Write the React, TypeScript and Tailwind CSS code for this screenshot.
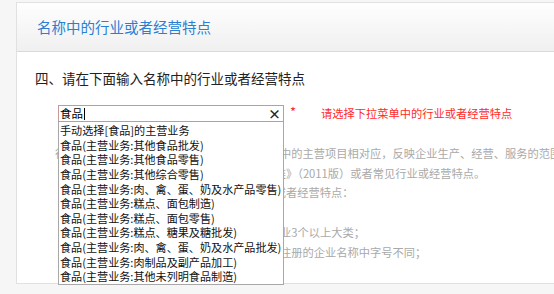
import React from "react";

const items = [
  "手动选择[食品]的主营业务",
  "食品(主营业务:其他食品批发)",
  "食品(主营业务:其他食品零售)",
  "食品(主营业务:其他综合零售)",
  "食品(主营业务:肉、禽、蛋、奶及水产品零售)",
  "食品(主营业务:糕点、面包制造)",
  "食品(主营业务:糕点、面包零售)",
  "食品(主营业务:糕点、糖果及糖批发)",
  "食品(主营业务:肉、禽、蛋、奶及水产品批发)",
  "食品(主营业务:肉制品及副产品加工)",
  "食品(主营业务:其他未列明食品制造)",
];

const grayLines = [
  "行业或经营特点应当与企业拟登记的经营范围中的主营项目相对应，反映企业生产、经营、服务的范围",
  "行业或经营特点可以参照《国民经济行业分类》（2011版）或者常见行业或经营特点。",
  "您需要在下方输入框中输入企业名称的行业或者经营特点：",
  "1、与企业名称中字号相同；",
  "2、名称中的行业或经营特点跨越国民经济行业3个以上大类；",
  "3、行业或经营特点应当与本行政区域内已经注册的企业名称中字号不同；",
];

export default function App() {
  return (
    <div
      className="w-[554px] h-[294px] overflow-hidden bg-[#f6f6f6] pl-[16px] pt-[2px]"
      style={{ fontFamily: '"Noto Sans CJK SC", "Noto Sans", sans-serif' }}
    >
      <div className="h-[282px] bg-white border-l border-t border-b border-[#e1e1e1]">
        <div className="h-[49px] border-b border-[#dadada] bg-gradient-to-b from-[#fefefe] to-[#f0f0f0] flex items-center pl-[20px]">
          <span className="text-[14.5px] leading-[20px] text-[#2a7fd3]">名称中的行业或者经营特点</span>
        </div>
        <div className="pl-[18px]">
          <div className="mt-[16px] text-[13.5px] leading-[20px] text-[#222]">
            四、请在下面输入名称中的行业或者经营特点
          </div>
          <div className="mt-[17px] ml-[23px] flex items-start">
            <div className="relative w-[226px]">
              <div className="h-[17px] border border-[#c39a9a] bg-white flex items-center pl-[1px] pr-[2px]">
                <span className="text-[11.5px] leading-[15px] text-black">食品</span>
                <span className="w-px h-[12px] bg-black ml-[1px]" />
                <span className="flex-1" />
                <span className="text-[13px] leading-[15px] font-bold text-[#222]">×</span>
              </div>
              <div className="absolute left-0 top-[17px] w-[226px] bg-white border border-t-0 border-[#a8a8a8] z-10 pt-[1px]">
                {items.map((t, i) => (
                  <div key={i} className="h-[14.65px] leading-[14.65px] text-[11.1px] text-[#111] pl-[1px] whitespace-nowrap">
                    {t}
                  </div>
                ))}
              </div>
            </div>
            <span className="ml-[6px] text-[13px] leading-[14px] text-[#ff2a2a]">*</span>
            <span className="ml-[25px] mt-[1px] text-[11.25px] leading-[14px] text-[#ff2a2a]">
              请选择下拉菜单中的行业或者经营特点
            </span>
          </div>
          <div className="mt-[22px] ml-[20px] text-[11.25px] leading-[19.7px] text-[#a9a9a9] whitespace-nowrap">
            {grayLines.map((t, i) => (
              <div key={i} className="flex items-center">
                {i === 0 ? (
                  <span className="inline-block w-[6px] h-[7px] rounded-full bg-[#e23b3b]" />
                ) : (
                  <span className="inline-block w-[6px]" />
                )}
                <span className={i >= 4 ? "-ml-[1px]" : ""}>{t}</span>
              </div>
            ))}
          </div>
        </div>
      </div>
    </div>
  );
}
